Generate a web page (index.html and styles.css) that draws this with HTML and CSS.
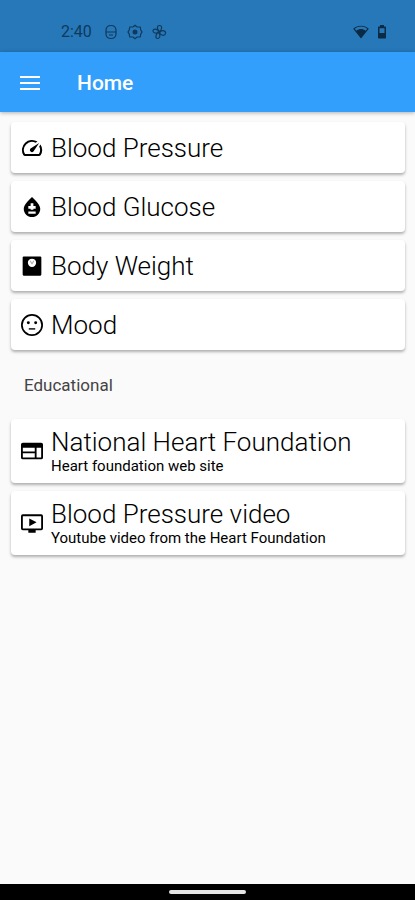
FILE: index.html
```html
<!DOCTYPE html>
<html lang="en">
<head>
<meta charset="utf-8">
<meta name="viewport" content="width=device-width, initial-scale=1">
<title>Home</title>
<link rel="stylesheet" href="styles.css">
</head>
<body>
<div class="status">
  <time class="clock">2:40</time>
  <svg class="glyph" viewBox="0 0 16 16" aria-hidden="true"><path d="M3 6.500C3 3.500 5 1.500 8 1.500s5 2 5 5v3.500c0 2.500-2 4.500-5 4.500S3 12.500 3 10zM3 8h10M6 11h4"/></svg>
  <svg class="glyph" viewBox="0 0 16 16" aria-hidden="true"><path d="M8 1.200l2 1.800h3.200l.6 3L15 8l-1.200 2-.6 3H10l-2 1.800L6 13H2.800l-.6-3L1 8l1.200-2 .6-3H6z"/><circle class="dot" cx="8" cy="8" r="2.500"/></svg>
  <svg class="glyph" viewBox="0 0 16 16" aria-hidden="true"><path d="M8 7C5.500 4.500 6 1.500 8.500 1.500S11.500 4.500 9 7.500M9 8c2.500-2.500 6-1 5.500 1.500S10.500 12 8.500 9M8 9c2 3 .5 5.500-1.500 5.500S4 11 7 8.500M7 8.500C4.500 10 1.500 8.500 2 6.500S5 4.500 8 7"/><circle class="dot" cx="8" cy="8" r="1.500"/></svg>
  <svg class="solid wifi" viewBox="0 0 16 16" aria-hidden="true"><path fill-rule="evenodd" d="M8 14.500L.2 4.700C4.500.6 11.500.6 15.800 4.700zM1.800 4.800l1.500 1.900c2.700-2.200 6.700-2.200 9.400 0l1.500-1.900C10.500 1.800 5.500 1.800 1.800 4.800z"/></svg>
  <svg class="solid battery" viewBox="0 0 10 16" aria-hidden="true"><path fill-rule="evenodd" d="M3 1h4v1.500h1.200q.8 0 .8.800v10.400q0 .8-.8.800H1.800q-.8 0-.8-.8V3.300q0-.8.800-.8H3zM2.500 4.200V9h5V4.200z"/></svg>
</div>
<header class="appbar">
  <button class="menu" type="button" aria-label="Menu"><svg viewBox="0 0 24 24" aria-hidden="true"><path d="M2 5h20v2H2zM2 11h20v2H2zM2 17h20v2H2z"/></svg></button>
  <h1>Home</h1>
</header>
<main>
  <nav class="list" aria-label="Health records">
    <a class="card" href="#pressure">
      <svg viewBox="0 0 24 24" aria-hidden="true"><path d="m20.380 8.570-1.230 1.850a8 8 0 0 1-.22 7.580H5.070A8 8 0 0 1 15.580 6.850l1.850-1.230A10 10 0 0 0 3.350 19a2 2 0 0 0 1.720 1h13.850a2 2 0 0 0 1.740-1 10 10 0 0 0-.27-10.440zM10.590 15.410a2 2 0 0 0 2.830 0l5.660-8.490-8.490 5.660a2 2 0 0 0 0 2.830z" transform="translate(-1.200 -1.200) scale(1.100)"/></svg>
      <span class="name">Blood Pressure</span>
    </a>
    <a class="card" href="#glucose">
      <svg viewBox="0 0 24 24" aria-hidden="true"><path fill-rule="evenodd" d="M12 1C7.500 5.500 3 9.500 3 14.200 3 19 7 23 12 23s9-4 9-8.800C21 9.500 16.500 5.500 12 1zM10.500 8h3v3H16v2.800h-2.500V15h-3v-1.200H8V11h2.500zM8 17h8v2.300H8z"/></svg>
      <span class="name">Blood Glucose</span>
    </a>
    <a class="card" href="#weight">
      <svg viewBox="0 0 24 24" aria-hidden="true"><path fill-rule="evenodd" d="M3 1.500h18q1.200 0 1.200 1.200v18.600q0 1.200-1.200 1.200H3q-1.200 0-1.200-1.200V2.700Q1.800 1.500 3 1.500zM12 4a4.500 4.500 0 1 0 0 9 4.500 4.500 0 0 0 0-9z"/><path d="M9.500 6.500l1-.5 1.500 2.500 1.500-2.500 1 .5-2 3.500h-1z" opacity=".3"/></svg>
      <span class="name">Body Weight</span>
    </a>
    <a class="card" href="#mood">
      <svg viewBox="0 0 24 24" aria-hidden="true"><path fill-rule="evenodd" d="M12 0a12 12 0 1 0 0 24 12 12 0 0 0 0-24zm0 1.900a10.100 10.100 0 1 1 0 20.200 10.100 10.100 0 0 1 0-20.200z"/><circle cx="8" cy="9.500" r="1.600"/><circle cx="16" cy="9.500" r="1.600"/><path d="M8.500 15.500h7V17h-7z"/></svg>
      <span class="name">Mood</span>
    </a>
  </nav>
  <h2>Educational</h2>
  <nav class="list" aria-label="Educational">
    <a class="card tall" href="#foundation">
      <svg viewBox="0 0 24 24" aria-hidden="true"><path fill-rule="evenodd" d="M2 3h20q2 0 2 2v14q0 2-2 2H2q-2 0-2-2V5q0-2 2-2zm0 5.500v4h13v-4zm0 6V19h13v-4.500zm15-6V19h5V8.500z"/></svg>
      <span class="text"><span class="name">National Heart Foundation</span><span class="note">Heart foundation web site</span></span>
    </a>
    <a class="card tall" href="#video">
      <svg viewBox="0 0 24 24" aria-hidden="true"><path fill-rule="evenodd" d="M2 2.500h20q2 0 2 2V18q0 2-2 2h-6v2.500H8V20H2q-2 0-2-2V4.500q0-2 2-2zm0 2V18h20V4.500zM9 7l8 4.300-8 4.200z"/></svg>
      <span class="text"><span class="name">Blood Pressure video</span><span class="note">Youtube video from the Heart Foundation</span></span>
    </a>
  </nav>
</main>
<footer class="gesture"><span class="pill"></span></footer>
</body>
</html>
```
FILE: styles.css
```css
* { box-sizing: border-box; }

body {
  display: flex;
  flex-direction: column;
  min-height: 100vh;
  margin: 0;
  background: #fafafa;
  color: #000;
  font-family: Roboto, "Liberation Sans", sans-serif;
}

svg { flex: none; fill: currentColor; }

.status {
  display: flex;
  align-items: center;
  gap: 8px;
  height: 52px;
  padding: 12px 28px 0 61px;
  background: #2678b8;
  color: #10395c;
}

.clock { margin-right: 3px; font-size: 16px; line-height: 20px; }

.glyph {
  width: 16px;
  height: 16px;
  fill: none;
  stroke: currentColor;
  stroke-width: 1.2;
}

.glyph .dot { fill: currentColor; stroke: none; }
.solid { color: #0c2a44; }
.wifi { width: 16px; height: 16px; margin-left: auto; }
.battery { width: 10px; height: 16px; }

.appbar {
  display: flex;
  align-items: center;
  gap: 33px;
  height: 60px;
  padding: 2px 16px 0;
  background: #319ffb;
  color: #fff;
  box-shadow: 0 1px 4px rgba(0, 0, 0, .3);
}

.menu {
  display: flex;
  padding: 2px;
  border: 0;
  background: none;
  color: inherit;
}

.menu svg { width: 24px; height: 24px; }

h1 { margin: 0; font-size: 21px; line-height: 28px; font-weight: 500; }

main { flex: 1; padding: 10px 10px 10px 11px; }

.list { display: flex; flex-direction: column; gap: 8px; }

.card {
  display: flex;
  align-items: center;
  gap: 7px;
  min-height: 51px;
  padding: 0 9px;
  border-radius: 4px;
  background: #fff;
  color: inherit;
  text-decoration: none;
  box-shadow: 0 2px 3px rgba(0, 0, 0, .3);
}

.card svg { width: 24px; height: 24px; padding: 1px; }
.tall { min-height: 64px; }
.text { display: flex; flex-direction: column; }
.name { font-size: 26px; line-height: 30px; font-weight: 300; }
.note { font-size: 15px; line-height: 18px; }

h2 {
  margin: 25px 13px 24px;
  font-size: 17px;
  line-height: 20px;
  font-weight: 400;
  color: #444;
}

.gesture {
  display: flex;
  align-items: center;
  justify-content: center;
  height: 16px;
  background: #000;
}

.pill { width: 77px; height: 4px; border-radius: 2px; background: #e4e4e4; }
```
